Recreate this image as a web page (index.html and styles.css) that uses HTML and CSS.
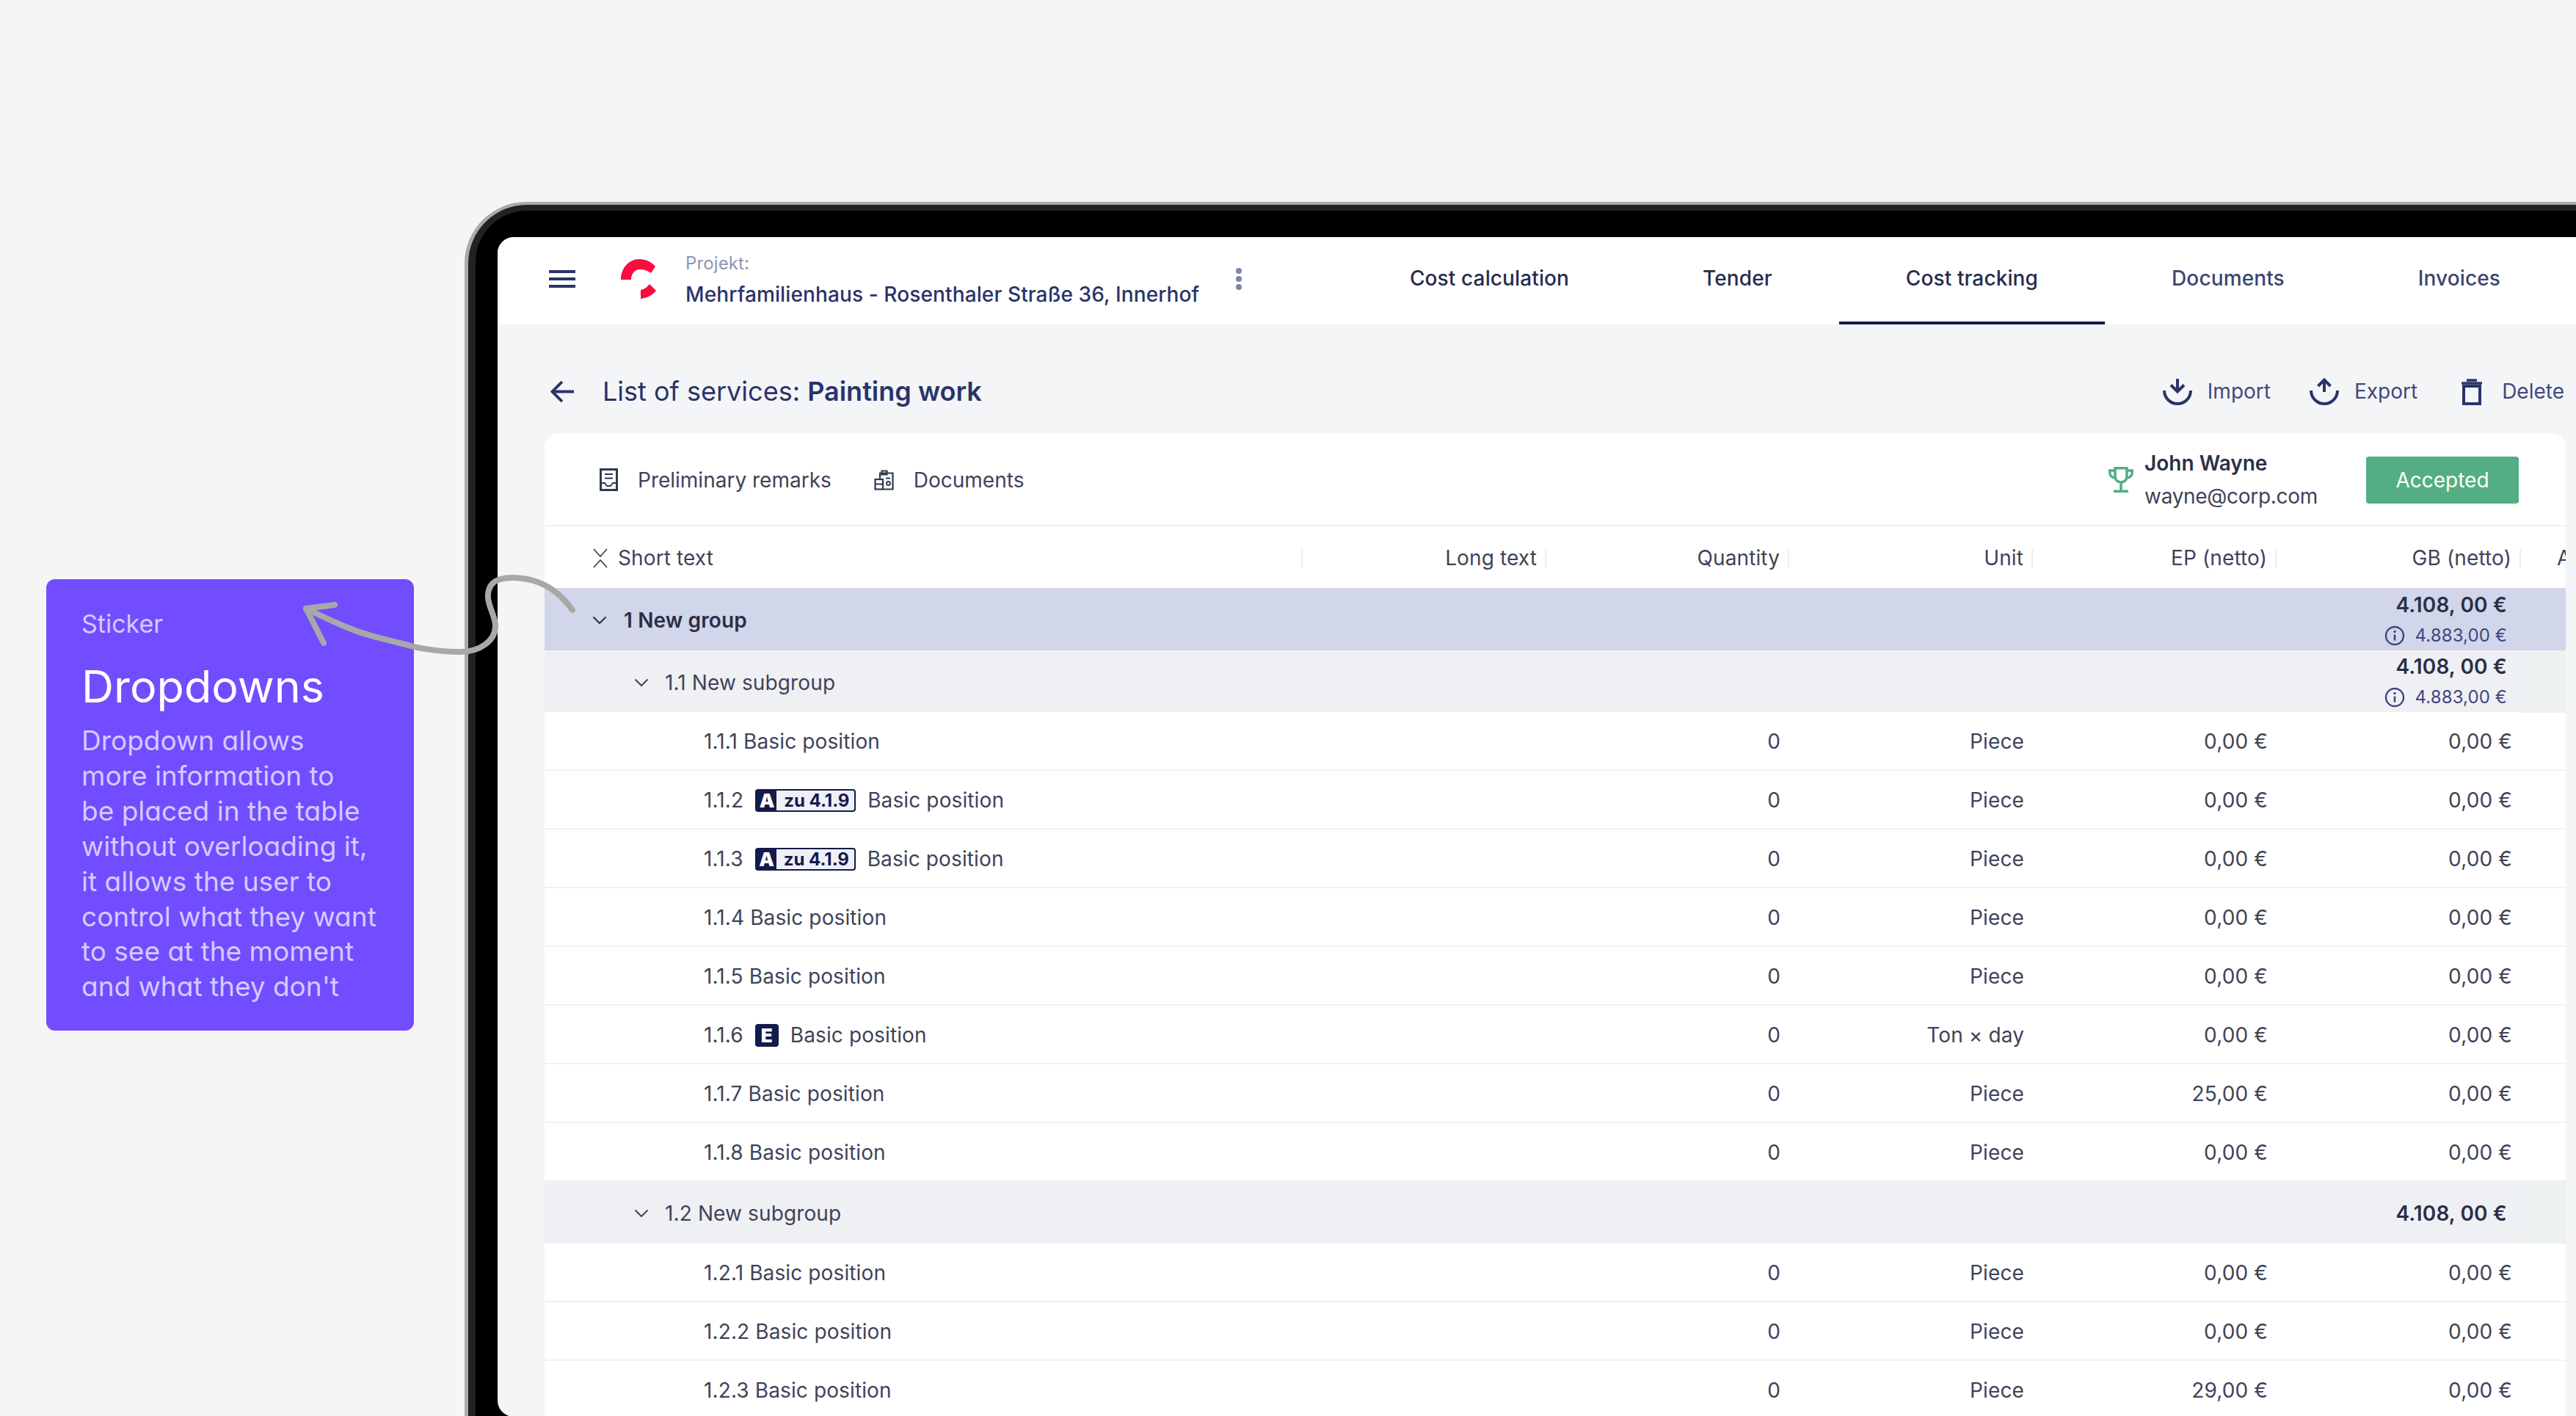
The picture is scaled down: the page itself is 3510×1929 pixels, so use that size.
FILE: index.html
```html
<!DOCTYPE html>
<html lang="en">
<head>
    <meta charset="UTF-8" />
    <title>Dropdowns - Cost tracking</title>
    <link rel="stylesheet" href="styles.css">
</head>
<body>
    <svg class="defs" width="0" height="0">
        <symbol id="chev" viewBox="0 0 20 12"><path d="M1.5 1.5L10 10L18.5 1.5" fill="none" stroke="currentColor" stroke-width="2" /></symbol>
        <symbol id="info" viewBox="0 0 28 28"><circle cx="14" cy="14" r="12" fill="none" stroke="currentColor" stroke-width="2.4" /><path d="M14 12.5V20.5" stroke="currentColor" stroke-width="2.6" /><circle cx="14" cy="8.5" r="1.7" fill="currentColor" /></symbol>
    </svg>

    <div class="stage">
        <div class="sticker">
            <div class="sticker-label">Sticker</div>
            <h2>Dropdowns</h2>
            <p>Dropdown allows<br>more information to<br>be placed in the table<br>without overloading it,<br>it allows the user to<br>control what they want<br>to see at the moment<br>and what they don't</p>
        </div>

        <div class="device">
            <div class="bezel">
                <div class="black">
                    <div class="screen">
                        <div class="topbar">
                            <svg class="burger" width="36" height="24" viewBox="0 0 36 24"><path d="M0 2H36M0 12H36M0 22H36" stroke="#2a3468" stroke-width="4" /></svg>
                            <svg class="logo" width="48" height="54" viewBox="0 0 48 54">
                                <path d="M0 28C0 12 11 0 25 0C34 0 42 4 47 10L41 19C37 16 32 14 26 14C19 14 14 20 14 28Z" fill="#ff0a3e" />
                                <path d="M39 34L48 43C42 50 35 53 27 54L27 42C32 41 36 38 39 34Z" fill="#ff0a3e" />
                            </svg>
                            <div class="project">
                                <div class="project-label">Projekt:</div>
                                <div class="project-name">Mehrfamilienhaus - Rosenthaler Straße 36, Innerhof</div>
                            </div>
                            <svg class="dots" width="8" height="30" viewBox="0 0 8 30"><circle cx="4" cy="4" r="4" fill="#7e83a8" /><circle cx="4" cy="15" r="4" fill="#7e83a8" /><circle cx="4" cy="26" r="4" fill="#7e83a8" /></svg>
                            <ul class="tabs">
                                <li>Cost calculation</li>
                                <li>Tender</li>
                                <li class="active">Cost tracking</li>
                                <li class="muted">Documents</li>
                                <li class="muted">Invoices</li>
                            </ul>
                        </div>

                        <div class="title-row">
                            <svg class="back" width="32" height="31" viewBox="0 0 32 31"><path d="M32 15.5H3M16 2L2.500 15.500L16 29" fill="none" stroke="#2a3468" stroke-width="3.800" /></svg>
                            <h1>List of services: <b>Painting work</b></h1>
                            <div class="actions">
                                <a class="import">
                                    <svg width="40" height="37" viewBox="0 0 40 37"><path d="M20 1V18M11 9.500L20 18.500L29 9.500M2 17A18 18 0 0 0 38 17" fill="none" stroke="#2a3468" stroke-width="4" /></svg>
                                    Import
                                </a>
                                <a>
                                    <svg width="40" height="37" viewBox="0 0 40 37"><path d="M20 19V3M11.500 11L20 2.500L28.500 11M2 17A18 18 0 0 0 38 17" fill="none" stroke="#2a3468" stroke-width="4" /></svg>
                                    Export
                                </a>
                                <a class="delete">
                                    <svg width="30" height="37" viewBox="0 0 30 37"><path d="M8 3H22M1 7H29" stroke="#2a3468" stroke-width="3.500" /><rect x="4" y="11" width="22" height="24" fill="none" stroke="#2a3468" stroke-width="4" /></svg>
                                    Delete
                                </a>
                            </div>
                        </div>

                        <div class="card">
                            <div class="toolbar">
                                <a class="tool">
                                    <svg width="25" height="31" viewBox="0 0 25 31"><rect x="1.500" y="1.500" width="22" height="28" fill="none" stroke="#2f3a4d" stroke-width="3" /><path d="M7 8H18M7 13.500H18M2 20H7L10 24H15L18 20H23" fill="none" stroke="#2f3a4d" stroke-width="2" /></svg>
                                    Preliminary remarks
                                </a>
                                <a class="tool">
                                    <svg width="27" height="28" viewBox="0 0 27 28"><path d="M8 13V4.500H25.500V26.500H12M10.500 1.500H17.500V6.500H10.500Z" fill="none" stroke="#2f3a4d" stroke-width="2.200" /><rect x="1.500" y="13" width="10.500" height="13.500" fill="none" stroke="#2f3a4d" stroke-width="2.200" /><path d="M1.500 19.500H12M16 11.500H22" stroke="#2f3a4d" stroke-width="2" /><circle cx="19.500" cy="18.500" r="2.500" fill="none" stroke="#2f3a4d" stroke-width="1.800" /></svg>
                                    Documents
                                </a>
                                <div class="winner">
                                    <svg width="34" height="35" viewBox="0 0 34 35"><path d="M9 1.750H25V13C25 18 21 21 17 21C13 21 9 18 9 13ZM9 5H1.750V8C1.750 12 5 15 9 15M25 5H32.250V8C32.250 12 29 15 25 15M17 21V33M7 33.250H27" fill="none" stroke="#53ae83" stroke-width="3.500" /></svg>
                                    <div class="winner-text">
                                        <div class="winner-name">John Wayne</div>
                                        <div class="winner-mail">wayne@corp.com</div>
                                    </div>
                                </div>
                                <span class="status">Accepted</span>
                            </div>

                            <div class="row head">
                                <div class="th first">
                                    <svg width="20" height="27" viewBox="0 0 20 27"><path d="M1 1L10 11L19 1M1 26L10 16L19 26" fill="none" stroke="#3f4358" stroke-width="1.800" /></svg>
                                    Short text
                                </div>
                                <div class="th">Long text</div>
                                <div class="th">Quantity</div>
                                <div class="th">Unit</div>
                                <div class="th">EP (netto)</div>
                                <div class="th">GB (netto)</div>
                                <div class="th last">A</div>
                            </div>

                            <div class="row group">
                                <div class="name"><svg class="chev"><use href="#chev" /></svg>1 New group</div>
                                <div></div><div></div><div></div><div></div>
                                <div class="money">
                                    <div>4.108, 00 €</div>
                                    <div class="gross"><svg class="info"><use href="#info" /></svg>4.883,00 €</div>
                                </div>
                                <div></div>
                            </div>

                            <div class="row subgroup">
                                <div class="name"><svg class="chev"><use href="#chev" /></svg>1.1 New subgroup</div>
                                <div></div><div></div><div></div><div></div>
                                <div class="money">
                                    <div>4.108, 00 €</div>
                                    <div class="gross"><svg class="info"><use href="#info" /></svg>4.883,00 €</div>
                                </div>
                                <div class="tail"></div>
                            </div>

                            <div class="row item">
                                <div class="name">1.1.1 Basic position</div>
                                <div></div><div class="num">0</div><div class="num">Piece</div><div class="num">0,00 €</div><div class="num">0,00 €</div><div></div>
                            </div>
                            <div class="row item">
                                <div class="name">1.1.2<span class="badge"><span class="badge-letter">A</span><span class="badge-ref">zu 4.1.9</span></span>Basic position</div>
                                <div></div><div class="num">0</div><div class="num">Piece</div><div class="num">0,00 €</div><div class="num">0,00 €</div><div></div>
                            </div>
                            <div class="row item">
                                <div class="name">1.1.3<span class="badge"><span class="badge-letter">A</span><span class="badge-ref">zu 4.1.9</span></span>Basic position</div>
                                <div></div><div class="num">0</div><div class="num">Piece</div><div class="num">0,00 €</div><div class="num">0,00 €</div><div></div>
                            </div>
                            <div class="row item">
                                <div class="name">1.1.4 Basic position</div>
                                <div></div><div class="num">0</div><div class="num">Piece</div><div class="num">0,00 €</div><div class="num">0,00 €</div><div></div>
                            </div>
                            <div class="row item">
                                <div class="name">1.1.5 Basic position</div>
                                <div></div><div class="num">0</div><div class="num">Piece</div><div class="num">0,00 €</div><div class="num">0,00 €</div><div></div>
                            </div>
                            <div class="row item">
                                <div class="name">1.1.6<span class="badge"><span class="badge-letter">E</span></span>Basic position</div>
                                <div></div><div class="num">0</div><div class="num">Ton × day</div><div class="num">0,00 €</div><div class="num">0,00 €</div><div></div>
                            </div>
                            <div class="row item">
                                <div class="name">1.1.7 Basic position</div>
                                <div></div><div class="num">0</div><div class="num">Piece</div><div class="num">25,00 €</div><div class="num">0,00 €</div><div></div>
                            </div>
                            <div class="row item">
                                <div class="name">1.1.8 Basic position</div>
                                <div></div><div class="num">0</div><div class="num">Piece</div><div class="num">0,00 €</div><div class="num">0,00 €</div><div></div>
                            </div>

                            <div class="row subgroup">
                                <div class="name"><svg class="chev"><use href="#chev" /></svg>1.2 New subgroup</div>
                                <div></div><div></div><div></div><div></div>
                                <div class="money"><div>4.108, 00 €</div></div>
                                <div class="tail"></div>
                            </div>

                            <div class="row item">
                                <div class="name">1.2.1 Basic position</div>
                                <div></div><div class="num">0</div><div class="num">Piece</div><div class="num">0,00 €</div><div class="num">0,00 €</div><div></div>
                            </div>
                            <div class="row item">
                                <div class="name">1.2.2 Basic position</div>
                                <div></div><div class="num">0</div><div class="num">Piece</div><div class="num">0,00 €</div><div class="num">0,00 €</div><div></div>
                            </div>
                            <div class="row item">
                                <div class="name">1.2.3 Basic position</div>
                                <div></div><div class="num">0</div><div class="num">Piece</div><div class="num">29,00 €</div><div class="num">0,00 €</div><div></div>
                            </div>
                        </div>
                    </div>
                </div>
            </div>
        </div>

        <!-- hand drawn arrow from the sticker to the group row -->
        <svg class="pointer" width="3510" height="1929" viewBox="0 0 3510 1929">
            <path d="M780 831C758 800 730 787 698 787C672 787 664 798 665 815C667 830 675 840 675 853C675 872 655 888 627 888C600 888 570 883 560 880C530 872 500 866 479 857C458 849 440 840 417 829M456 824L417 829L441 876" fill="none" stroke="#a8a8a8" stroke-width="8" stroke-linecap="round" stroke-linejoin="round" />
        </svg>
    </div>
</body>
</html>
```

FILE: styles.css
```css
* {
    margin: 0;
    padding: 0;
    box-sizing: border-box;
}

body {
    font-family: Inter, "Liberation Sans", sans-serif;
    font-size: 28px;
    letter-spacing: 0.12px;
    background-color: #f5f5f5;
    color: #3f4358;
}

.defs {
    display: block;
}

.stage {
    position: relative;
    display: flex;
    align-items: flex-start;
    width: 3510px;
    height: 1929px;
    padding-left: 63px;
    overflow: hidden;
}

.pointer {
    position: absolute;
    top: 0;
    left: 0;
}

/* sticker */
.sticker {
    flex: none;
    width: 501px;
    height: 615px;
    margin-top: 789px;
    padding: 38px 0 0 48px;
    background-color: #714dff;
    border-radius: 12px;
    font-feature-settings: "cv11";
    letter-spacing: 0;
    color: #d4cbff;
    white-space: nowrap;
}

.sticker-label {
    font-size: 34px;
    line-height: 46px;
}

.sticker h2 {
    margin-top: 23px;
    font-size: 61px;
    line-height: 78px;
    font-weight: 400;
    color: #fff;
}

.sticker p {
    margin-top: 11px;
    font-size: 37px;
    line-height: 47.900px;
}

/* device frame */
.device {
    flex: none;
    width: 2877px;
    margin: 275px 0 0 69px;
    padding: 4px 0 0 5px;
    background-color: #aaa;
    border-radius: 84px 0 0 0;
}

.bezel {
    padding: 8px 0 0 10px;
    background-color: #222;
    border-radius: 80px 0 0 0;
}

.black {
    padding: 36px 0 60px 30px;
    background-color: #000;
    border-radius: 70px 0 0 0;
}

.screen {
    width: 2832px;
    height: 1607px;
    background-color: #f4f5f7;
    border-radius: 22px 0 0 22px;
    overflow: hidden;
}

/* top bar */
.topbar {
    display: flex;
    align-items: center;
    height: 119px;
    padding: 0 12px 5px 70px;
    background-color: #fff;
}

.logo {
    margin-left: 62px;
}

.project {
    margin-left: 40px;
    line-height: 42px;
    color: #2a3468;
    white-space: nowrap;
}

.project-label {
    font-size: 24px;
    color: #8f94b6;
}

.project-name {
    font-weight: 500;
}

.dots {
    margin-left: 50px;
}

.tabs {
    display: flex;
    align-self: stretch;
    margin: 0 0 -5px auto;
    list-style: none;
}

.tabs li {
    display: flex;
    align-items: center;
    padding: 0 91px 3px;
    border-bottom: 4px solid transparent;
    font-weight: 500;
    color: #272c4f;
    white-space: nowrap;
}

.tabs li.active {
    border-bottom-color: #141a4c;
}

.tabs li.muted {
    color: #3d4670;
}

/* title row */
.title-row {
    display: flex;
    align-items: center;
    height: 148px;
    padding: 34px 16px 0 72px;
}

.title-row h1 {
    margin-left: 39px;
    font-size: 36px;
    font-weight: 400;
    letter-spacing: 0;
    color: #2a3468;
}

.title-row h1 b {
    font-weight: 600;
}

.actions {
    display: flex;
    align-items: center;
    gap: 56px;
    margin-left: auto;
    letter-spacing: 0;
    color: #40497a;
}

.actions a {
    display: flex;
    align-items: center;
    gap: 21px;
}

.actions a.import {
    margin-right: -3px;
}

.actions a.delete {
    gap: 26px;
    margin-left: 3px;
}

/* card */
.card {
    width: 2754px;
    margin-left: 64px;
    background-color: #fff;
    border-radius: 20px 20px 0 0;
    overflow: hidden;
}

.toolbar {
    display: flex;
    align-items: center;
    height: 127px;
    padding: 2px 64px 0 75px;
    border-bottom: 2px solid #eff0f2;
    letter-spacing: 0;
}

.tool {
    display: flex;
    align-items: center;
    gap: 27px;
    margin-right: 58px;
}

.winner {
    display: flex;
    align-items: center;
    gap: 15px;
    margin-left: auto;
}

.winner-text {
    line-height: 45px;
}

.winner-name {
    font-weight: 600;
    color: #2b2f45;
}

.winner-mail {
    letter-spacing: -0.3px;
}

.status {
    width: 208px;
    height: 64px;
    margin-left: 66px;
    background-color: #53ae83;
    border-radius: 4px;
    color: #fff;
    line-height: 64px;
    text-align: center;
}

/* table */
.row {
    display: grid;
    grid-template-columns: 1033px 332px 331px 332px 332px 333px 61px;
    align-items: center;
}

.head {
    height: 84px;
    padding-top: 2px;
}

.th {
    height: 27px;
    padding-right: 11px;
    border-right: 2px solid #eceef1;
    line-height: 27px;
    text-align: right;
    white-space: nowrap;
}

.th.first {
    display: flex;
    gap: 14px;
    padding-left: 66px;
}

.th.last {
    padding-left: 49px;
    border-right: 0;
    text-align: left;
}

.name {
    display: flex;
    align-items: center;
    white-space: pre;
}

.chev {
    width: 20px;
    height: 12px;
}

.group {
    height: 85px;
    padding-top: 1px;
    background-color: #d1d6ea;
    font-weight: 600;
    color: #2b2f45;
}

.group .name {
    gap: 23px;
    padding-left: 65px;
}

.subgroup {
    height: 84px;
    background-color: #eff0f4;
}

.subgroup .name {
    gap: 22px;
    padding: 2px 0 0 122px;
}

.tail {
    align-self: stretch;
    background-color: #eef1f1;
}

.money {
    padding: 1px 19px 0 0;
    font-weight: 600;
    line-height: 42px;
    text-align: right;
    color: #2b2f45;
}

.gross {
    display: flex;
    align-items: center;
    justify-content: flex-end;
    gap: 13px;
    font-size: 24px;
    font-weight: 400;
    color: #3d4680;
}

.info {
    width: 28px;
    height: 28px;
}

.item {
    height: 80px;
    padding-top: 2px;
    border-bottom: 2px solid #f0f1f3;
}

.item .name {
    padding-left: 217px;
}

.num {
    padding-right: 12px;
    text-align: right;
}

.badge {
    display: flex;
    height: 31px;
    margin: 0 16px;
    font-size: 24px;
    font-weight: 700;
    line-height: 31px;
    letter-spacing: 0;
    color: #141a4c;
}

.badge-letter {
    width: 32px;
    background-color: #141a4c;
    border-radius: 4px;
    color: #fff;
    font-size: 26px;
    font-weight: 900;
    text-align: center;
}

.badge-ref {
    width: 108px;
    margin-left: -3px;
    padding-left: 10px;
    background-color: #eff0f6;
    border: 2px solid #141a4c;
    border-left: 0;
    border-radius: 0 4px 4px 0;
    line-height: 27px;
}
```
